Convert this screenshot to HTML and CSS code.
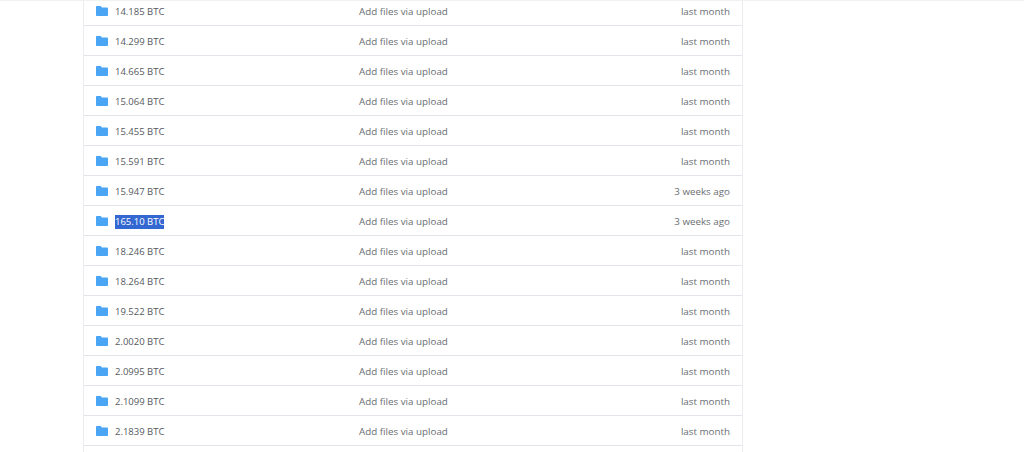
FILE: index.html
```html
<!DOCTYPE html>
<html lang="en">
<head>
    <meta charset="UTF-8">
    <title>Files</title>
    <link rel="stylesheet" href="styles.css">
</head>
<body>
    <svg class="defs" width="0" height="0">
        <symbol id="folder" viewBox="0 0 12 10">
            <path d="M1 0h3.2c.4 0 .7.1.9.4l.8 1.1h5c.6 0 1.1.5 1.1 1.1v6.3c0 .6-.5 1.1-1.1 1.1H1c-.6 0-1-.5-1-1.1V1c0-.6.4-1 1-1z"/>
        </symbol>
    </svg>
    <div class="file-list">
        <div class="file-row first">
            <svg class="folder-icon"><use href="#folder"/></svg>
            <span class="file-name">14.185 BTC</span>
            <span class="file-msg">Add files via upload</span>
            <span class="file-age">last month</span>
        </div>
        <div class="file-row">
            <svg class="folder-icon"><use href="#folder"/></svg>
            <span class="file-name">14.299 BTC</span>
            <span class="file-msg">Add files via upload</span>
            <span class="file-age">last month</span>
        </div>
        <div class="file-row">
            <svg class="folder-icon"><use href="#folder"/></svg>
            <span class="file-name">14.665 BTC</span>
            <span class="file-msg">Add files via upload</span>
            <span class="file-age">last month</span>
        </div>
        <div class="file-row">
            <svg class="folder-icon"><use href="#folder"/></svg>
            <span class="file-name">15.064 BTC</span>
            <span class="file-msg">Add files via upload</span>
            <span class="file-age">last month</span>
        </div>
        <div class="file-row">
            <svg class="folder-icon"><use href="#folder"/></svg>
            <span class="file-name">15.455 BTC</span>
            <span class="file-msg">Add files via upload</span>
            <span class="file-age">last month</span>
        </div>
        <div class="file-row">
            <svg class="folder-icon"><use href="#folder"/></svg>
            <span class="file-name">15.591 BTC</span>
            <span class="file-msg">Add files via upload</span>
            <span class="file-age">last month</span>
        </div>
        <div class="file-row">
            <svg class="folder-icon"><use href="#folder"/></svg>
            <span class="file-name">15.947 BTC</span>
            <span class="file-msg">Add files via upload</span>
            <span class="file-age">3 weeks ago</span>
        </div>
        <div class="file-row">
            <svg class="folder-icon"><use href="#folder"/></svg>
            <span class="file-name"><span class="selected">165.10 BTC</span></span>
            <span class="file-msg">Add files via upload</span>
            <span class="file-age">3 weeks ago</span>
        </div>
        <div class="file-row">
            <svg class="folder-icon"><use href="#folder"/></svg>
            <span class="file-name">18.246 BTC</span>
            <span class="file-msg">Add files via upload</span>
            <span class="file-age">last month</span>
        </div>
        <div class="file-row">
            <svg class="folder-icon"><use href="#folder"/></svg>
            <span class="file-name">18.264 BTC</span>
            <span class="file-msg">Add files via upload</span>
            <span class="file-age">last month</span>
        </div>
        <div class="file-row">
            <svg class="folder-icon"><use href="#folder"/></svg>
            <span class="file-name">19.522 BTC</span>
            <span class="file-msg">Add files via upload</span>
            <span class="file-age">last month</span>
        </div>
        <div class="file-row">
            <svg class="folder-icon"><use href="#folder"/></svg>
            <span class="file-name">2.0020 BTC</span>
            <span class="file-msg">Add files via upload</span>
            <span class="file-age">last month</span>
        </div>
        <div class="file-row">
            <svg class="folder-icon"><use href="#folder"/></svg>
            <span class="file-name">2.0995 BTC</span>
            <span class="file-msg">Add files via upload</span>
            <span class="file-age">last month</span>
        </div>
        <div class="file-row">
            <svg class="folder-icon"><use href="#folder"/></svg>
            <span class="file-name">2.1099 BTC</span>
            <span class="file-msg">Add files via upload</span>
            <span class="file-age">last month</span>
        </div>
        <div class="file-row">
            <svg class="folder-icon"><use href="#folder"/></svg>
            <span class="file-name">2.1839 BTC</span>
            <span class="file-msg">Add files via upload</span>
            <span class="file-age">last month</span>
        </div>
    </div>
</body>
</html>
```

FILE: styles.css
```css
html,
body {
    height: 100%;
    margin: 0;
    overflow: hidden;
    background-color: #ffffff;
}

body {
    border-top: 1px solid #f0f1f3;
    box-sizing: border-box;
    font-family: "Open Sans", "Noto Sans", sans-serif;
    font-size: 9.8px;
}

.defs {
    display: none;
}

.file-list {
    width: 658px;
    height: 100%;
    margin-left: 83px;
    border-left: 1px solid #eaecef;
    border-right: 1px solid #eaecef;
}

.file-row {
    display: flex;
    align-items: center;
    height: 29px;
    padding: 0 12px 0 12px;
    border-bottom: 1px solid #e1e4e8;
}

.file-row.first {
    height: 19px;
    padding-bottom: 5px;
}

.folder-icon {
    width: 12px;
    height: 10px;
    margin-right: 7px;
    fill: #4aa5f5;
}

.file-name,
.file-msg,
.file-age {
    padding-top: 2px;
}

.file-name {
    width: 244px;
    font-size: 9.5px;
    color: #55595e;
}

.selected {
    display: inline-block;
    line-height: 14px;
    background-color: #3367d1;
    color: #ffffff;
}

.file-msg {
    flex: 1;
    color: #6a6e73;
}

.file-age {
    color: #6a6e73;
}
```
